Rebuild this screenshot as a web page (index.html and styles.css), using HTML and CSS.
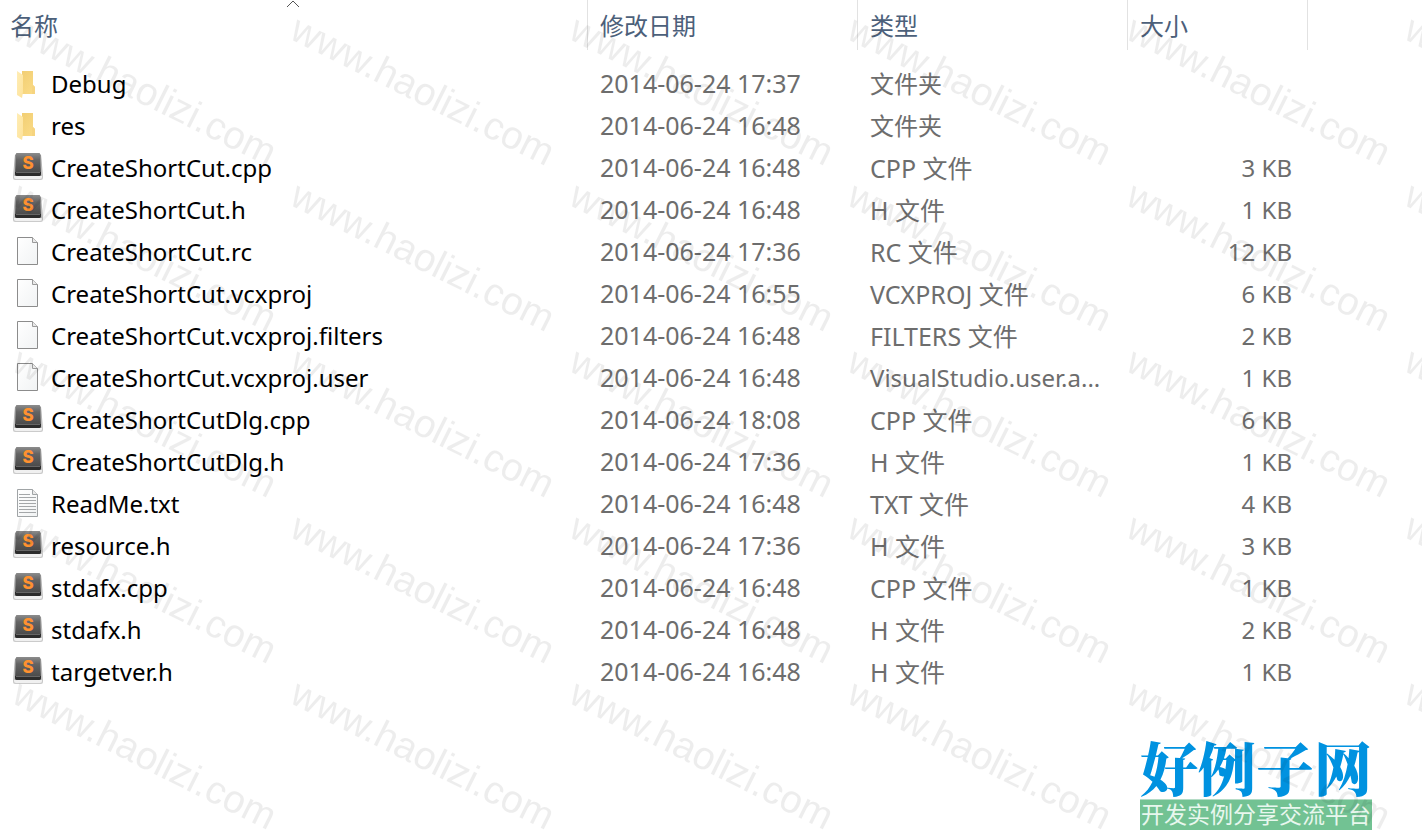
FILE: index.html
```
<!DOCTYPE html>
<html lang="zh-CN">
<head>
    <meta charset="UTF-8">
    <meta name="viewport" content="width=device-width, initial-scale=1.0">
    <title>CreateShortCut</title>
    <link rel="stylesheet" href="styles.css">
</head>
<body>

<!-- 图标定义 -->
<svg class="defs" aria-hidden="true">
    <defs>
        <linearGradient id="folder-back" x1="0" y1="0" x2="1" y2="1">
            <stop offset="0" stop-color="#f0cc70"/>
            <stop offset="1" stop-color="#fbdc88"/>
        </linearGradient>
        <linearGradient id="folder-front" x1="0" y1="0" x2="1" y2="1">
            <stop offset="0" stop-color="#ffedb5"/>
            <stop offset="1" stop-color="#fde29a"/>
        </linearGradient>
        <linearGradient id="key-side" x1="0" y1="0" x2="0" y2="1">
            <stop offset="0" stop-color="#8a8a8a"/>
            <stop offset="0.5" stop-color="#b8b8b8"/>
            <stop offset="1" stop-color="#cccccc"/>
        </linearGradient>
        <linearGradient id="key-top" x1="0" y1="0" x2="0" y2="1">
            <stop offset="0" stop-color="#8c8c8c"/>
            <stop offset="0.3" stop-color="#646464"/>
            <stop offset="1" stop-color="#434343"/>
        </linearGradient>
        <linearGradient id="paper" x1="0" y1="0" x2="1" y2="1">
            <stop offset="0" stop-color="#ffffff"/>
            <stop offset="1" stop-color="#f1f3f4"/>
        </linearGradient>
        <symbol id="folder" viewBox="0 0 32 32">
            <path d="M5 3H21V17L23 19V26H10V3Z" fill="url(#folder-back)"/>
            <path d="M21 17L23 19V26H20V18Z" fill="#f6d480"/>
            <path d="M5 3L11 7V24L10 30L5 27Z" fill="url(#folder-front)"/>
        </symbol>
        <symbol id="sublime" viewBox="0 0 32 32">
            <path d="M5 1H27L29 3L31 24V26Q31 28 29 28H3Q1 28 1 26V24L3 3Z" fill="url(#key-side)"/>
            <path d="M2 24H30V25Q30 27 28 27H4Q2 27 2 25Z" fill="#f0f0f0"/>
            <path d="M5 1H27Q28 1 28 2L29 22Q29 24 27 24H5Q3 24 3 22L4 2Q4 1 5 1Z" fill="url(#key-top)"/>
            <path d="M3 20H29V22Q29 24 27 24H5Q3 24 3 22Z" fill="#2c2c2c"/>
            <path d="M4 20.5H28" stroke="#666"/>
            <text class="key-letter" x="16" y="17" text-anchor="middle">S</text>
        </symbol>
        <symbol id="file" viewBox="0 0 32 32">
            <path d="M5.5 1.5H20.5L25.5 6.5V28.5H5.5Z" fill="url(#paper)" stroke="#8c8c8c"/>
            <path d="M20.5 1.5V6.5H25.5" fill="#e9e9e9" stroke="#9a9a9a"/>
        </symbol>
        <symbol id="text" viewBox="0 0 32 32">
            <path d="M5.5 1.5H20.5L25.5 6.5V28.5H5.5Z" fill="url(#paper)" stroke="#a0a4a6"/>
            <path d="M20.5 1.5V6.5H25.5" fill="#e9e9e9" stroke="#a0a4a6"/>
            <path d="M7 6.5H18M7 9.5H24M7 12.5H24M7 15.5H24M7 18.5H24M7 21.5H24M7 24.5H24" stroke="#a4a7a9"/>
        </symbol>
    </defs>
</svg>

<main class="explorer">
    <table class="file-list">
        <colgroup>
            <col class="col-name">
            <col class="col-date">
            <col class="col-type">
            <col class="col-size">
            <col>
        </colgroup>
        <thead>
            <tr>
                <th aria-sort="ascending">
                    <button type="button">名称</button>
                    <svg class="sort-mark" viewBox="0 0 14 8" aria-hidden="true"><path d="M1 7L7 1L13 7" fill="none" stroke="#555"/></svg>
                </th>
                <th><button type="button">修改日期</button></th>
                <th><button type="button">类型</button></th>
                <th><button type="button">大小</button></th>
                <td></td>
            </tr>
        </thead>
        <tbody>
            <tr>
                <td class="name"><div><svg class="icon"><use href="#folder"/></svg>Debug</div></td>
                <td class="date">2014-06-24 17:37</td><td class="compact">文件夹</td><td class="size"></td><td></td>
            </tr>
            <tr>
                <td class="name"><div><svg class="icon"><use href="#folder"/></svg>res</div></td>
                <td class="date">2014-06-24 16:48</td><td class="compact">文件夹</td><td class="size"></td><td></td>
            </tr>
            <tr>
                <td class="name"><div><svg class="icon"><use href="#sublime"/></svg>CreateShortCut.cpp</div></td>
                <td class="date">2014-06-24 16:48</td><td>CPP 文件</td><td class="size">3 KB</td><td></td>
            </tr>
            <tr>
                <td class="name"><div><svg class="icon"><use href="#sublime"/></svg>CreateShortCut.h</div></td>
                <td class="date">2014-06-24 16:48</td><td>H 文件</td><td class="size">1 KB</td><td></td>
            </tr>
            <tr>
                <td class="name"><div><svg class="icon"><use href="#file"/></svg>CreateShortCut.rc</div></td>
                <td class="date">2014-06-24 17:36</td><td>RC 文件</td><td class="size">12 KB</td><td></td>
            </tr>
            <tr>
                <td class="name"><div><svg class="icon"><use href="#file"/></svg>CreateShortCut.vcxproj</div></td>
                <td class="date">2014-06-24 16:55</td><td>VCXPROJ 文件</td><td class="size">6 KB</td><td></td>
            </tr>
            <tr>
                <td class="name"><div><svg class="icon"><use href="#file"/></svg>CreateShortCut.vcxproj.filters</div></td>
                <td class="date">2014-06-24 16:48</td><td>FILTERS 文件</td><td class="size">2 KB</td><td></td>
            </tr>
            <tr>
                <td class="name"><div><svg class="icon"><use href="#file"/></svg>CreateShortCut.vcxproj.user</div></td>
                <td class="date">2014-06-24 16:48</td><td class="compact">VisualStudio.user.a...</td><td class="size">1 KB</td><td></td>
            </tr>
            <tr>
                <td class="name"><div><svg class="icon"><use href="#sublime"/></svg>CreateShortCutDlg.cpp</div></td>
                <td class="date">2014-06-24 18:08</td><td>CPP 文件</td><td class="size">6 KB</td><td></td>
            </tr>
            <tr>
                <td class="name"><div><svg class="icon"><use href="#sublime"/></svg>CreateShortCutDlg.h</div></td>
                <td class="date">2014-06-24 17:36</td><td>H 文件</td><td class="size">1 KB</td><td></td>
            </tr>
            <tr>
                <td class="name"><div><svg class="icon"><use href="#text"/></svg>ReadMe.txt</div></td>
                <td class="date">2014-06-24 16:48</td><td>TXT 文件</td><td class="size">4 KB</td><td></td>
            </tr>
            <tr>
                <td class="name"><div><svg class="icon"><use href="#sublime"/></svg>resource.h</div></td>
                <td class="date">2014-06-24 17:36</td><td>H 文件</td><td class="size">3 KB</td><td></td>
            </tr>
            <tr>
                <td class="name"><div><svg class="icon"><use href="#sublime"/></svg>stdafx.cpp</div></td>
                <td class="date">2014-06-24 16:48</td><td>CPP 文件</td><td class="size">1 KB</td><td></td>
            </tr>
            <tr>
                <td class="name"><div><svg class="icon"><use href="#sublime"/></svg>stdafx.h</div></td>
                <td class="date">2014-06-24 16:48</td><td>H 文件</td><td class="size">2 KB</td><td></td>
            </tr>
            <tr>
                <td class="name"><div><svg class="icon"><use href="#sublime"/></svg>targetver.h</div></td>
                <td class="date">2014-06-24 16:48</td><td>H 文件</td><td class="size">1 KB</td><td></td>
            </tr>
        </tbody>
    </table>
</main>

<footer class="footer">
    <div class="brand">
        <div class="brand-name">好例子网</div>
        <div class="brand-slogan">开发实例分享交流平台</div>
    </div>
</footer>

<!-- 平铺水印 -->
<svg class="watermark" aria-hidden="true">
    <defs>
        <pattern id="mark" width="557" height="166" patternUnits="userSpaceOnUse">
            <text transform="translate(10 38) rotate(26.5)">www.haolizi.com</text>
            <text transform="translate(288 38) rotate(26.5)">www.haolizi.com</text>
        </pattern>
    </defs>
    <rect width="100%" height="100%" fill="url(#mark)"/>
</svg>

</body>
</html>
```

FILE: styles.css
```
* {
    box-sizing: border-box;
}

body {
    position: relative;
    display: flex;
    flex-direction: column;
    min-height: 100vh;
    margin: 0;
    background-color: #fff;
    font-family: "Noto Sans", "Noto Sans CJK SC", sans-serif;
    font-size: 25px;
    color: #6d6d6d;
}

.defs {
    position: absolute;
    width: 0;
    height: 0;
}

/* 文件列表 */
.file-list {
    width: 100%;
    table-layout: fixed;
    border-collapse: collapse;
}

.col-name {
    width: 588px;
}

.col-date,
.col-type {
    width: 270px;
}

.col-size {
    width: 180px;
}

th {
    position: relative;
    padding: 0 0 13px;
    font-weight: normal;
}

th button {
    display: block;
    width: 100%;
    height: 50px;
    padding: 2px 12px 0;
    border: none;
    border-right: 1px solid #e2e2e2;
    background: none;
    font-family: inherit;
    font-size: 24px;
    line-height: 48px;
    text-align: left;
    color: #4c607a;
}

th:first-child button {
    padding-left: 10px;
}

.sort-mark {
    position: absolute;
    top: 0;
    left: 50%;
    width: 14px;
    height: 8px;
    margin-left: -8px;
}

tbody td {
    height: 42px;
    padding: 0 12px;
    line-height: 42px;
    white-space: nowrap;
    vertical-align: top;
}

tbody .name {
    font-size: 24px;
    color: #000;
}

.name div {
    display: flex;
    align-items: center;
    gap: 7px;
}

.icon {
    flex: none;
    width: 32px;
    height: 32px;
}

.key-letter {
    font-family: Inter, sans-serif;
    font-size: 17px;
    font-weight: 800;
    fill: #ff9130;
}

tbody .date {
    line-height: 40px;
}

.compact {
    font-size: 24px;
}

tbody .size {
    padding-right: 16px;
    text-align: right;
    font-size: 24px;
}

/* 右下角标志 */
.footer {
    display: flex;
    justify-content: flex-end;
    margin-top: auto;
    padding: 0 50px 10px;
}

.brand {
    width: 232px;
    text-align: center;
    white-space: nowrap;
}

.brand-name {
    padding-bottom: 3px;
    font-family: "Noto Serif CJK SC", "Noto Sans CJK SC", sans-serif;
    font-size: 58px;
    font-weight: 900;
    line-height: 60px;
    color: #0092e0;
}

.brand-slogan {
    padding-bottom: 4px;
    border-top: 1px solid #b5dcc6;
    background-color: #72c293;
    font-family: "Noto Sans CJK SC", sans-serif;
    font-size: 23px;
    line-height: 26px;
    color: #e8f7ee;
}

.watermark {
    position: absolute;
    top: 0;
    left: 0;
    width: 100%;
    height: 100%;
    pointer-events: none;
}

.watermark text {
    font-family: "Liberation Sans", Arial, sans-serif;
    font-size: 39px;
    fill: rgba(0, 0, 0, 0.07);
}
```
